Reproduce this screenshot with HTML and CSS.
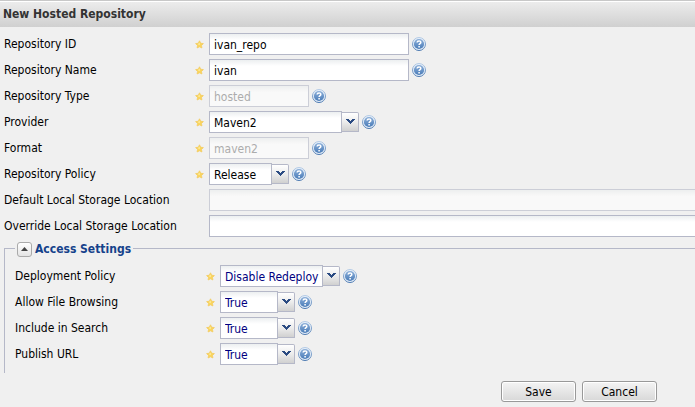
FILE: index.html
```html
<!DOCTYPE html>
<html lang="en">
<head>
<meta charset="utf-8">
<title>New Hosted Repository</title>
<link rel="stylesheet" href="styles.css">
</head>
<body>
<svg class="defs" aria-hidden="true">
  <defs>
    <linearGradient id="blue" x1="0" y1="0" x2="0" y2="1"><stop offset="0" stop-color="#8db0da"/><stop offset="1" stop-color="#4a7cb8"/></linearGradient>
    <linearGradient id="rim" x1="0" y1="0" x2="0" y2="1"><stop offset="0" stop-color="#b4cbe6"/><stop offset="1" stop-color="#4a78b0"/></linearGradient>
  </defs>
  <symbol id="star" viewBox="0 0 9 9"><path d="M4.5.8 5.7 3.2 8.4 3.6 6.5 5.4 6.9 8 4.5 6.8 2.1 8 2.5 5.4.6 3.6 3.3 3.2Z" fill="#fad55c" stroke="#f3cb62" stroke-width=".8" stroke-linejoin="round"/><path d="M4.5 2.4 5.1 3.9 4.5 5.2 2.8 4.2Z" fill="#fdea9a"/></symbol>
  <symbol id="help" viewBox="0 0 14 14"><circle cx="7" cy="7" r="6.5" fill="#e8f0f9" stroke="url(#rim)"/><circle cx="7" cy="7" r="5.1" fill="url(#blue)"/><path d="M5.1 5.5C5.2 3.3 8.9 3.4 8.8 5.4 8.8 6.7 7.1 6.6 7.1 8.1M7.1 9.1V10.6" fill="none" stroke="#fff" stroke-width="1.5"/></symbol>
  <symbol id="arrow" viewBox="0 0 9 6"><path d="M0 0H3V1H4V2H5V1H6V0H9V1H8V2H7V3H6V4H5V5H4V4H3V3H2V2H1V1H0Z" fill="#2b4b82" shape-rendering="crispEdges"/></symbol>
</svg>
<main>
  <h1>New Hosted Repository</h1>
  <form>
    <div class="rows">
      <div class="row"><label for="id">Repository ID</label><svg class="star"><use href="#star"/></svg><div class="field"><input class="text" id="id" value="ivan_repo"><svg class="help"><use href="#help"/></svg></div></div>
      <div class="row"><label for="name">Repository Name</label><svg class="star"><use href="#star"/></svg><div class="field"><input class="text" id="name" value="ivan"><svg class="help"><use href="#help"/></svg></div></div>
      <div class="row"><label for="type">Repository Type</label><svg class="star"><use href="#star"/></svg><div class="field"><input class="text short" id="type" value="hosted" disabled><svg class="help"><use href="#help"/></svg></div></div>
      <div class="row"><label for="provider">Provider</label><svg class="star"><use href="#star"/></svg><div class="field"><div class="combo wide"><span class="face"></span><span class="trigger"><svg><use href="#arrow"/></svg></span><select id="provider"><option>Maven2</option></select></div><svg class="help"><use href="#help"/></svg></div></div>
      <div class="row"><label for="format">Format</label><svg class="star"><use href="#star"/></svg><div class="field"><input class="text short" id="format" value="maven2" disabled><svg class="help"><use href="#help"/></svg></div></div>
      <div class="row"><label for="policy">Repository Policy</label><svg class="star"><use href="#star"/></svg><div class="field"><div class="combo medium"><span class="face"></span><span class="trigger"><svg><use href="#arrow"/></svg></span><select id="policy"><option>Release</option></select></div><svg class="help"><use href="#help"/></svg></div></div>
      <div class="row"><label for="default">Default Local Storage Location</label><span></span><div class="field"><input class="text fill" id="default" disabled></div></div>
      <div class="row"><label for="override">Override Local Storage Location</label><span></span><div class="field"><input class="text fill" id="override"></div></div>
    </div>
    <fieldset>
      <legend><button class="toggle" type="button" aria-label="Collapse Access Settings"><svg viewBox="0 0 7 4"><path d="M0 4H7L3.5 0Z" fill="#444"/></svg></button>Access Settings</legend>
      <div class="row"><label for="deploy">Deployment Policy</label><svg class="star"><use href="#star"/></svg><div class="field"><div class="combo deploy"><span class="face"></span><span class="trigger"><svg><use href="#arrow"/></svg></span><select id="deploy"><option>Disable Redeploy</option></select></div><svg class="help"><use href="#help"/></svg></div></div>
      <div class="row"><label for="browse">Allow File Browsing</label><svg class="star"><use href="#star"/></svg><div class="field"><div class="combo"><span class="face"></span><span class="trigger"><svg><use href="#arrow"/></svg></span><select id="browse"><option>True</option></select></div><svg class="help"><use href="#help"/></svg></div></div>
      <div class="row"><label for="search">Include in Search</label><svg class="star"><use href="#star"/></svg><div class="field"><div class="combo"><span class="face"></span><span class="trigger"><svg><use href="#arrow"/></svg></span><select id="search"><option>True</option></select></div><svg class="help"><use href="#help"/></svg></div></div>
      <div class="row"><label for="publish">Publish URL</label><svg class="star"><use href="#star"/></svg><div class="field"><div class="combo"><span class="face"></span><span class="trigger"><svg><use href="#arrow"/></svg></span><select id="publish"><option>True</option></select></div><svg class="help"><use href="#help"/></svg></div></div>
    </fieldset>
    <div class="actions"><button class="button" type="submit">Save</button><button class="button" type="button">Cancel</button></div>
  </form>
</main>
</body>
</html>
```
FILE: styles.css
```css
* { box-sizing: border-box; }
body { margin: 0; background: #f0f0f0; color: #000; font: 12px/16px "DejaVu Sans Condensed", "DejaVu Sans", sans-serif; font-stretch: condensed; }
input, select, button { font: inherit; color: inherit; }
svg { display: block; }
.defs { position: absolute; width: 0; height: 0; }
h1 { margin: 0; height: 27px; padding: 4px 3px; border-top: 1px solid #c8c8c8; box-shadow: inset 0 1px #fff; background: linear-gradient(#ededed, #d0d0d0); color: #333; font-size: 12px; line-height: 18px; font-weight: bold; }
.rows { padding: 6px 0 0 4px; }
.row { display: grid; grid-template-columns: 191px 14px 1fr; height: 26px; padding-bottom: 4px; align-items: center; }
.star { width: 9px; height: 9px; }
.field { display: flex; align-items: center; gap: 3px; }
.help { width: 14px; height: 14px; }
.text { width: 200px; height: 22px; margin: 0; padding: 1px 4px 0; border: 1px solid #b5b8c8; border-radius: 0; background: linear-gradient(#eceff0, #fff 6px); }
.text:disabled { color: #808080; opacity: .6; }
.short { width: 100px; }
.fill { width: 100%; border-right: 0; }
.combo { display: grid; grid-template-columns: 1fr 17px; width: 75px; height: 22px; }
.face { grid-area: 1 / 1; border: 1px solid #b5b8c8; background: linear-gradient(#eceff0, #fff 6px); }
.trigger { grid-area: 1 / 2; display: grid; place-items: center; margin: 1px 0; border: 1px solid #b5b8c8; border-left: 0; border-radius: 0 2px 0 0; background: linear-gradient(#fff, #ececec 50%, #d0d0d0); }
.trigger svg { width: 9px; height: 6px; }
.combo select { grid-area: 1 / 1 / 2 / 3; appearance: none; width: 100%; height: 22px; margin: 0; padding: 1px 20px 0 5px; border: 0; background: none; }
.wide { width: 150px; }
.medium { width: 80px; }
.deploy { width: 120px; }
fieldset { min-width: 0; margin: 0 0 0 4px; padding: 10px 0 4px 10px; border: solid #b5b8c8; border-width: 1px 0 0 1px; }
legend { display: flex; align-items: center; gap: 3px; height: 14px; padding: 2px 2px 0; color: #15428b; font-weight: bold; }
fieldset select { color: #000080; }
.toggle { display: grid; place-items: center; width: 15px; height: 15px; padding: 0; border: 1px solid #aaa; border-radius: 3px; background: linear-gradient(#fff, #e4e4e4); }
.toggle svg { width: 7px; height: 4px; }
.actions { display: flex; justify-content: flex-end; gap: 6px; padding: 8px 38px 0 0; }
.button { width: 75px; height: 21px; padding: 0; border: 1px solid #999; border-radius: 3px; background: linear-gradient(#f4f4f4, #d8d8d8); box-shadow: inset 0 0 0 1px #fff; }
```
